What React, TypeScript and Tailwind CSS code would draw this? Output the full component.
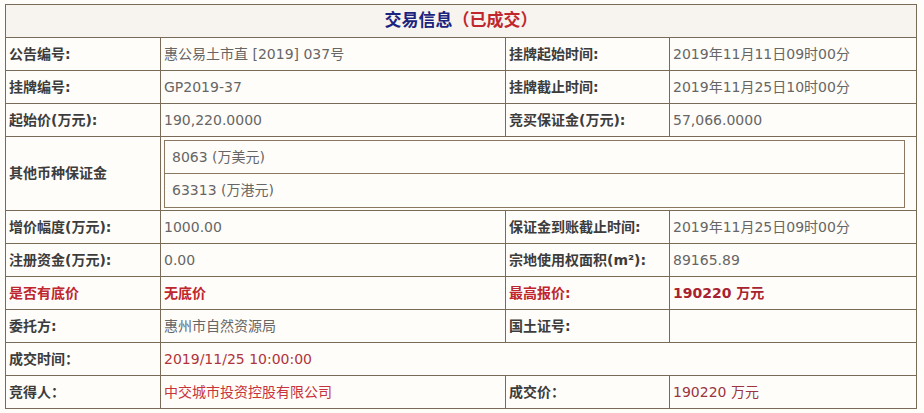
import React from "react";

const font = { fontFamily: '"DejaVu Sans", "Noto Sans CJK SC", sans-serif' };

function L({ children, red }: { children: React.ReactNode; red?: boolean }) {
  return (
    <td
      className={`h-[33px] border border-[#7a6a58] pl-[3px] text-[14px] font-bold ${
        red ? "text-[#c0262d]" : "text-[#3c3c3c]"
      }`}
    >
      {children}
    </td>
  );
}

function V({
  children,
  cls = "text-[#666]",
  colSpan,
}: {
  children?: React.ReactNode;
  cls?: string;
  colSpan?: number;
}) {
  return (
    <td colSpan={colSpan} className={`h-[33px] border border-[#7a6a58] pl-[3px] text-[14px] ${cls}`}>
      {children}
    </td>
  );
}

export default function App() {
  return (
    <div className="min-h-[413px] w-[924px] bg-[#fffdf9] pt-[4px] pl-[5px]" style={font}>
      <table className="w-[911px] table-fixed border-collapse bg-[#fffdf9]">
        <colgroup>
          <col className="w-[155px]" />
          <col className="w-[345px]" />
          <col className="w-[164px]" />
          <col className="w-[247px]" />
        </colgroup>
        <tbody>
          <tr>
            <td colSpan={4} className="h-[33px] border border-[#7a6a58] bg-[#f7f3ee] text-center text-[17px] font-bold">
              <span className="text-[#1a237e]">交易信息</span>
              <span className="text-[#c0262d]">（已成交）</span>
            </td>
          </tr>
          <tr>
            <L>公告编号:</L>
            <V>惠公易土市直 [2019] 037号</V>
            <L>挂牌起始时间:</L>
            <V>2019年11月11日09时00分</V>
          </tr>
          <tr>
            <L>挂牌编号:</L>
            <V>GP2019-37</V>
            <L>挂牌截止时间:</L>
            <V>2019年11月25日10时00分</V>
          </tr>
          <tr>
            <L>起始价(万元):</L>
            <V>190,220.0000</V>
            <L>竞买保证金(万元):</L>
            <V>57,066.0000</V>
          </tr>
          <tr>
            <L>其他币种保证金</L>
            <td colSpan={3} className="border border-[#7a6a58] pt-[3px] pb-[2px] pl-[3px]">
              <table className="w-[741px] table-fixed border-collapse">
                <tbody>
                  <tr>
                    <td className="h-[33px] border border-[#8a7860] pl-[7px] text-[14px] text-[#666]">8063 (万美元)</td>
                  </tr>
                  <tr>
                    <td className="h-[34px] border border-[#8a7860] pl-[7px] text-[14px] text-[#666]">63313 (万港元)</td>
                  </tr>
                </tbody>
              </table>
            </td>
          </tr>
          <tr>
            <L>增价幅度(万元):</L>
            <V>1000.00</V>
            <L>保证金到账截止时间:</L>
            <V>2019年11月25日09时00分</V>
          </tr>
          <tr>
            <L>注册资金(万元):</L>
            <V>0.00</V>
            <L>宗地使用权面积(m²):</L>
            <V>89165.89</V>
          </tr>
          <tr>
            <L red>是否有底价</L>
            <V cls="font-bold text-[#c0262d]">无底价</V>
            <L red>最高报价:</L>
            <V cls="font-bold text-[#a8232f]">190220 万元</V>
          </tr>
          <tr>
            <L>委托方:</L>
            <V>惠州市自然资源局</V>
            <L>国土证号:</L>
            <V></V>
          </tr>
          <tr>
            <L>成交时间：</L>
            <V colSpan={3} cls="text-[#b0343c]">2019/11/25 10:00:00</V>
          </tr>
          <tr>
            <L>竞得人：</L>
            <V cls="text-[#c8323a]">中交城市投资控股有限公司</V>
            <L>成交价：</L>
            <V cls="text-[#9a3540]">190220 万元</V>
          </tr>
        </tbody>
      </table>
    </div>
  );
}
